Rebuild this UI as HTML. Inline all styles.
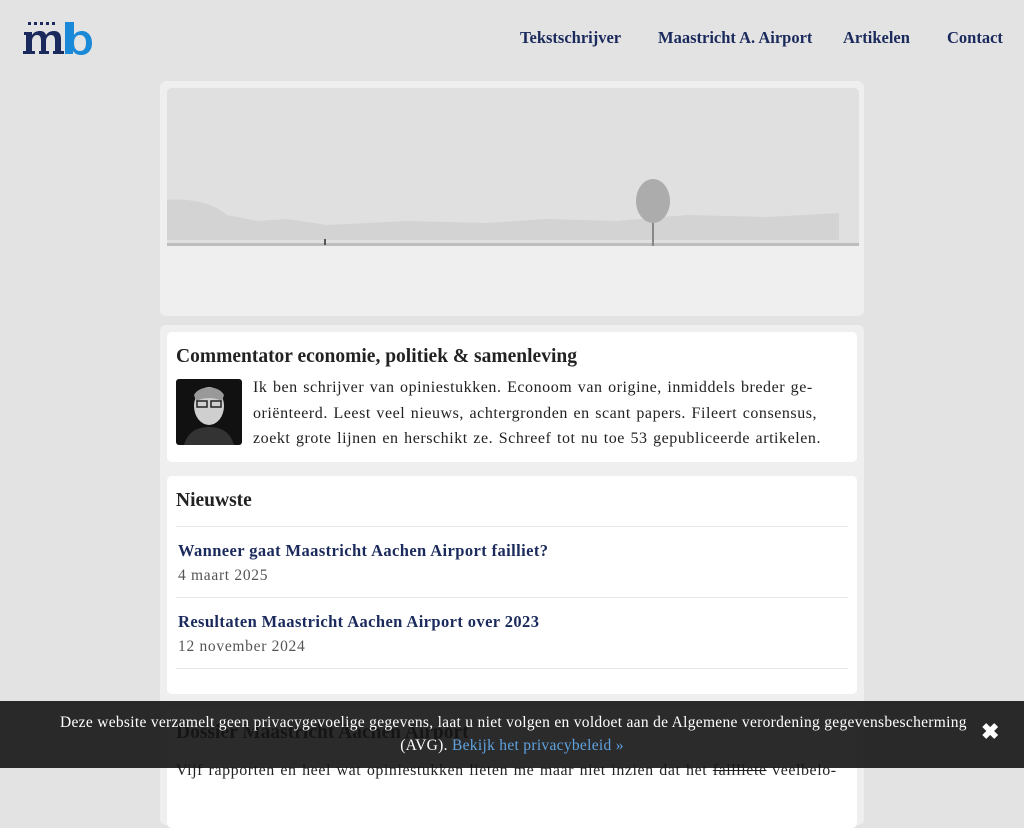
<!DOCTYPE html>
<html><head><meta charset="utf-8"><style>
body{margin:0;background:#e3e3e3;font-family:"Liberation Serif","DejaVu Serif",serif;color:#222;width:1024px;height:768px;overflow:hidden;position:relative}
.logo{position:absolute;left:23px;top:22px}
nav a{position:absolute;top:28px;font-weight:bold;font-size:16.5px;color:#1b2a5c;text-decoration:none}
.wrap{position:absolute;left:160px;width:704px;background:#efefef;border-radius:6px}
.hero{top:81px;height:235px}
.img{position:absolute;left:7px;top:7px;width:692px;height:222px;border-radius:5px;overflow:hidden;background:#e1e1e1}
.main{top:325px;height:500px}
.card{position:absolute;left:7px;width:690px;background:#fff;border-radius:5px}
h2{font-size:19.5px;margin:0;font-weight:bold;color:#222}
p{margin:0;font-size:16px;line-height:25.5px;letter-spacing:0.55px;word-spacing:1px;white-space:nowrap}
.item{border-top:1px solid #e6e6e6;margin:0 9px;padding:14px 2px 12px}
.item a{color:#1b2a5c;font-weight:bold;font-size:16.5px;text-decoration:none;display:block;line-height:20px;letter-spacing:0.4px}
.item span{color:#555;font-size:15.5px;display:block;margin-top:6px;letter-spacing:0.7px}
.cookie{position:absolute;left:0;top:701px;width:1024px;height:67px;background:rgba(20,20,20,.9);color:#fff;font-size:15.5px;text-align:center;line-height:22.5px;letter-spacing:0.3px;white-space:nowrap}
</style></head><body>
<svg class="logo" width="70" height="34" viewBox="0 0 70 34">
<g fill="#1b2a5c"><rect x="5" y="0" width="3" height="3"/><rect x="11" y="0" width="3" height="3"/><rect x="17" y="0" width="3" height="3"/><rect x="23" y="0" width="3" height="3"/><rect x="29" y="0" width="3" height="3"/>
<path d="M1 10h8v3c2-3 5-4 8-4 3 0 5 1 6 4 2-3 5-4 8-4 5 0 7 3 7 8v12h3v3H30v-3h2V19c0-4-1-6-4-6s-5 3-5 6v10h3v3H16v-3h2V19c0-4-1-6-4-6s-5 3-5 6v10h3v3H0v-3h3V13H1z"/></g>
<path fill="#1a8ad8" d="M42 0h9v13c2-3 5-4 8-4 6 0 10 5 10 12s-4 12-11 12c-3 0-6-1-8-4v3h-8zM51 21c0 5 2 8 6 8s6-3 6-8-2-8-6-8-6 3-6 8z"/>
</svg>
<nav><a style="left:520px">Tekstschrijver</a><a style="left:658px">Maastricht A. Airport</a><a style="left:843px">Artikelen</a><a style="left:947px">Contact</a></nav>
<div class="wrap hero"><div class="img">
<svg width="692" height="222" viewBox="0 0 692 222">
<rect width="692" height="222" fill="#e0e0e0"/>
<path d="M0 112c20-2 45 2 60 15l30 6 30-2 40 6 80-4 80 2 60-4 70 2 70-6 80 2 72-4v27H0z" fill="#d3d3d3"/>
<rect y="157" width="692" height="65" fill="#efefef"/>
<rect y="155" width="692" height="3" fill="#bdbdbd"/>
<line x1="486" y1="158" x2="486" y2="125" stroke="#888" stroke-width="2"/>
<ellipse cx="486" cy="113" rx="17" ry="22" fill="#acacac"/>
<rect x="157" y="151" width="2" height="6" fill="#555"/>
</svg></div></div>
<div class="wrap main">
<div class="card" style="top:7px;height:130px">
<h2 style="position:absolute;left:9px;top:14px">Commentator economie, politiek &amp; samenleving</h2>
<div style="position:absolute;left:9px;top:47px;width:66px;height:66px;background:#111;border-radius:3px;overflow:hidden"><svg width="66" height="66"><ellipse cx="33" cy="27" rx="15" ry="19" fill="#cfcfcf"/><path d="M18 16c5-10 25-10 30 0l-2 6c-8-4-18-4-26 0z" fill="#999"/><path d="M8 66c4-14 14-18 25-18s21 4 25 18z" fill="#333"/><rect x="21" y="22" width="10" height="6" fill="none" stroke="#222" stroke-width="1.5"/><rect x="35" y="22" width="10" height="6" fill="none" stroke="#222" stroke-width="1.5"/></svg></div>
<p style="position:absolute;left:86px;top:43px">Ik ben schrijver van opiniestukken. Econoom van origine, inmiddels breder ge-<br>oriënteerd. Leest veel nieuws, achtergronden en scant papers. Fileert consensus,<br>zoekt grote lijnen en herschikt ze. Schreef tot nu toe 53 gepubliceerde artikelen.</p>
</div>
<div class="card" style="top:151px;height:218px">
<h2 style="padding:14px 9px 14px">Nieuwste</h2>
<div class="item"><a>Wanneer gaat Maastricht Aachen Airport failliet?</a><span>4 maart 2025</span></div>
<div class="item" style="border-bottom:1px solid #e6e6e6"><a>Resultaten Maastricht Aachen Airport over 2023</a><span>12 november 2024</span></div>
</div>
<div class="card" style="top:383px;height:120px">
<h2 style="padding:14px 9px">Dossier Maastricht Aachen Airport</h2>
<p style="padding:0 9px">Vijf rapporten en heel wat opiniestukken lieten me maar niet inzien dat het <s>failliete</s> veelbelo-</p>
</div>
</div>
<div class="cookie"><div style="padding:11px 60px 0">Deze website verzamelt geen privacygevoelige gegevens, laat u niet volgen en voldoet aan de Algemene verordening gegevensbescherming<br>(AVG). <span style="color:#5fa3e0">Bekijk het privacybeleid »</span></div>
<span style="position:absolute;left:981px;top:20px;font-size:22px;font-weight:bold">✖</span></div>
</body></html>
